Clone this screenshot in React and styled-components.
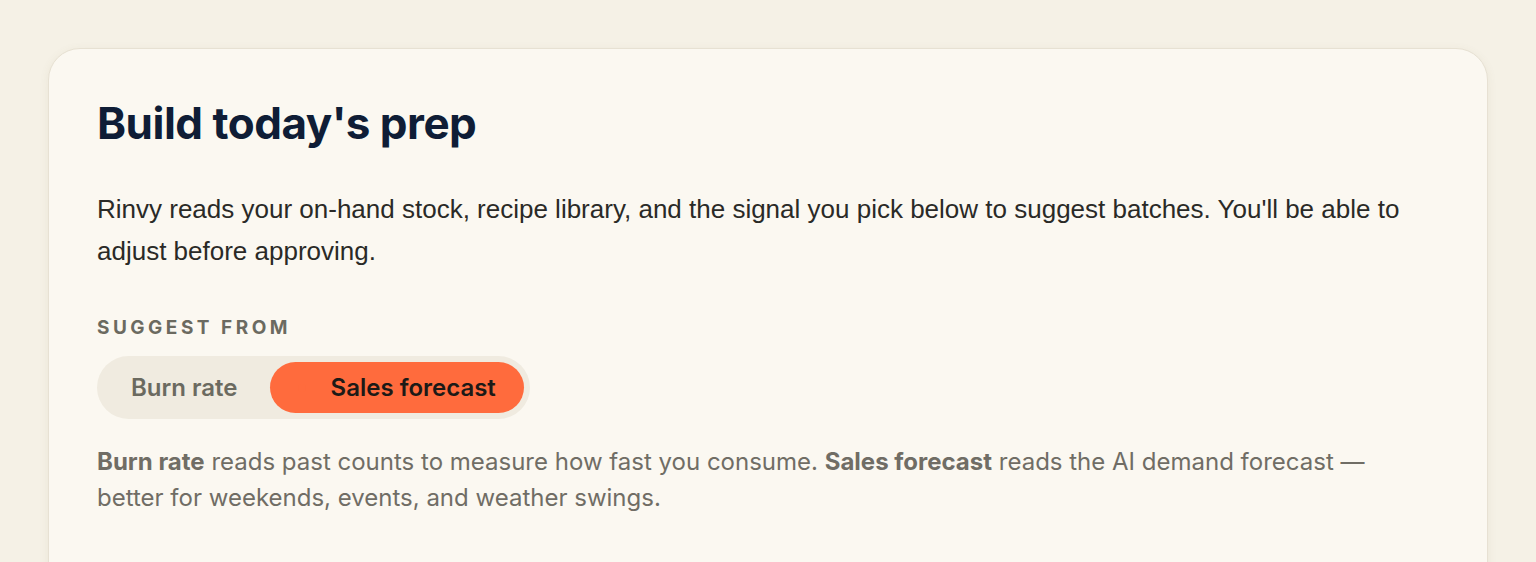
import React, { useState } from 'react';
import styled, { createGlobalStyle } from 'styled-components';

const GlobalStyle = createGlobalStyle`
  html, body {
    margin: 0;
    padding: 0;
    background: #f5f1e6;
  }
  body {
    font-family: Inter, "Noto Sans", sans-serif;
  }
`;

const Page = styled.div`
  padding: 48px 48px 0 48px;
  min-height: 562px;
  box-sizing: border-box;
`;

const Card = styled.section`
  background: #fbf8f1;
  border: 1px solid #e7e1d3;
  border-radius: 32px;
  box-shadow: 0 2px 10px rgba(120, 100, 60, 0.08);
  padding: 48px 48px 80px 48px;
`;

const Title = styled.h1`
  margin: 0;
  font-family: Inter, sans-serif;
  font-weight: 700;
  font-size: 44px;
  line-height: 52px;
  letter-spacing: -0.5px;
  color: #0f1d36;
`;

const Lead = styled.p`
  margin: 39px 0 0 0;
  font-family: "Liberation Sans", Arial, sans-serif;
  font-size: 26px;
  line-height: 42px;
  color: #2a2a27;
`;

const Label = styled.div`
  margin-top: 44px;
  font-family: Inter, sans-serif;
  font-weight: 700;
  font-size: 19px;
  letter-spacing: 3.5px;
  color: #6b6a60;
  text-transform: uppercase;
`;

const Segmented = styled.div`
  margin-top: 17px;
  display: inline-flex;
  gap: 4px;
  padding: 6px;
  background: #f0ebe0;
  border-radius: 999px;
`;

const Option = styled.button`
  display: flex;
  align-items: center;
  height: 51px;
  padding: 0 28px;
  border: none;
  border-radius: 999px;
  font-family: Inter, sans-serif;
  font-size: 24px;
  font-weight: 600;
  cursor: pointer;
  background: ${(p) => (p.$active ? '#ff6b3d' : 'transparent')};
  color: ${(p) => (p.$active ? '#1c1a17' : '#6b6a60')};
`;

const Dot = styled.span`
  width: 8px;
  height: 8px;
  margin-right: 25px;
  border-radius: 50%;
  background: #ff6b3d;
`;

const Help = styled.p`
  margin: 25px 0 0 0;
  max-width: 1290px;
  font-family: Inter, sans-serif;
  font-size: 24px;
  line-height: 36px;
  color: #706d65;

  b {
    font-weight: 700;
  }
`;

export default function App() {
  const [mode, setMode] = useState('forecast');
  return (
    <>
      <GlobalStyle />
      <Page>
        <Card>
          <Title>Build today's prep</Title>
          <Lead>
            Rinvy reads your on-hand stock, recipe library, and the signal you pick below to
            suggest batches. You'll be able to adjust before approving.
          </Lead>
          <Label>Suggest from</Label>
          <Segmented>
            <Option $active={mode === 'burn'} onClick={() => setMode('burn')}>
              {mode === 'burn' && <Dot />}
              Burn rate
            </Option>
            <Option $active={mode === 'forecast'} onClick={() => setMode('forecast')}>
              {mode === 'forecast' && <Dot />}
              Sales forecast
            </Option>
          </Segmented>
          <Help>
            <b>Burn rate</b> reads past counts to measure how fast you consume.{' '}
            <b>Sales forecast</b> reads the AI demand forecast — better for weekends, events,
            and weather swings.
          </Help>
        </Card>
      </Page>
    </>
  );
}
